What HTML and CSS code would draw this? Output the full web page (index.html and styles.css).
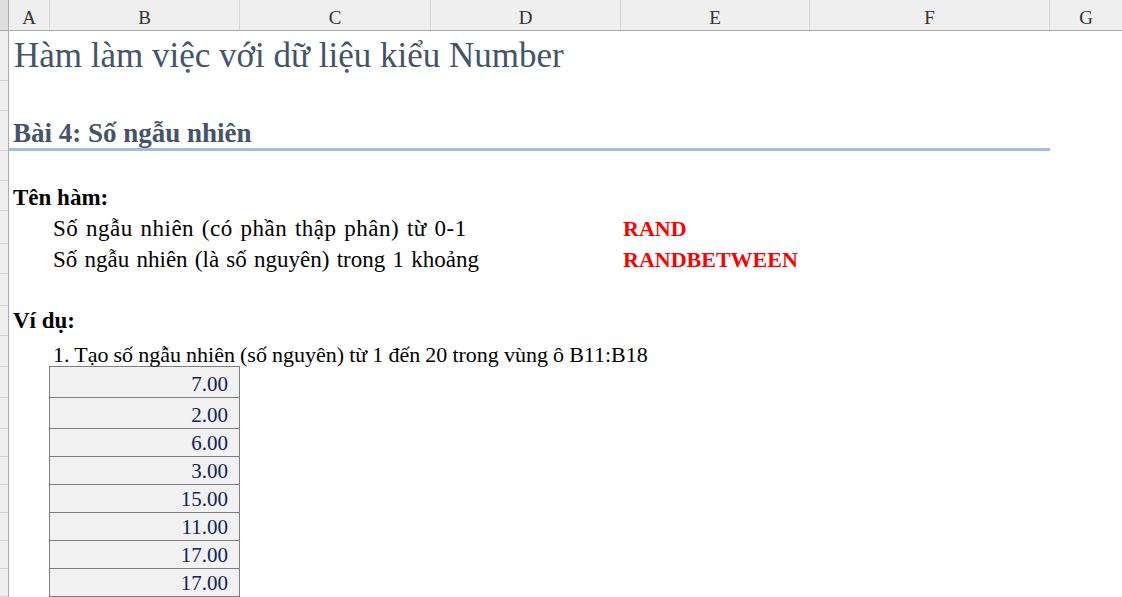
FILE: index.html
```html
<!DOCTYPE html>
<html lang="vi">
<head>
<meta charset="utf-8">
<title>Sheet</title>
<link rel="stylesheet" href="styles.css">
</head>
<body>
<div class="colheader">
  <div class="hcell corner"></div>
  <div class="hcell">A</div>
  <div class="hcell">B</div>
  <div class="hcell">C</div>
  <div class="hcell">D</div>
  <div class="hcell">E</div>
  <div class="hcell">F</div>
  <div class="hcell last">G</div>
</div>
<div class="body">
  <div class="rowheads">
    <div class="rh h50"></div>
    <div class="rh h30"></div>
    <div class="rh h40"></div>
    <div class="rh h30"></div>
    <div class="rh h30"></div>
    <div class="rh h33"></div>
    <div class="rh h30"></div>
    <div class="rh h32"></div>
    <div class="rh h30"></div>
    <div class="rh h31"></div>
    <div class="rh h31"></div>
    <div class="rh h31"></div>
    <div class="rh h28"></div>
    <div class="rh h28"></div>
    <div class="rh h28"></div>
    <div class="rh h28"></div>
    <div class="rh h28"></div>
    <div class="rh h28"></div>
  </div>
  <div class="sheet">
    <div class="row h50">
      <div class="cell title">Hàm làm việc với dữ liệu kiểu Number</div>
    </div>
    <div class="row h30"></div>
    <div class="row h40">
      <div class="cell heading">Bài 4: Số ngẫu nhiên</div>
    </div>
    <div class="row h30"></div>
    <div class="row h30">
      <div class="cell label">Tên hàm:</div>
    </div>
    <div class="row h33">
      <div class="cell colA"></div>
      <div class="cell text desc first span-bd pb4">Số ngẫu nhiên (có phần thập phân) từ 0-1</div>
      <div class="cell fn pb4">RAND</div>
    </div>
    <div class="row h30">
      <div class="cell colA"></div>
      <div class="cell text desc second span-bd pb3">Số ngẫu nhiên (là số nguyên) trong 1 khoảng</div>
      <div class="cell fn pb3">RANDBETWEEN</div>
    </div>
    <div class="row h32"></div>
    <div class="row h30">
      <div class="cell label pb4">Ví dụ:</div>
    </div>
    <div class="row h31">
      <div class="cell colA"></div>
      <div class="cell text example tbl-top">1. Tạo số ngẫu nhiên (số nguyên) từ 1 đến 20 trong vùng ô B11:B18</div>
    </div>
    <div class="row h31"><div class="cell colA"></div><div class="cell num">7.00</div></div>
    <div class="row h31"><div class="cell colA"></div><div class="cell num">2.00</div></div>
    <div class="row h28"><div class="cell colA"></div><div class="cell num">6.00</div></div>
    <div class="row h28"><div class="cell colA"></div><div class="cell num">3.00</div></div>
    <div class="row h28"><div class="cell colA"></div><div class="cell num">15.00</div></div>
    <div class="row h28"><div class="cell colA"></div><div class="cell num">11.00</div></div>
    <div class="row h28"><div class="cell colA"></div><div class="cell num">17.00</div></div>
    <div class="row h28"><div class="cell colA"></div><div class="cell num">17.00</div></div>
  </div>
</div>
</body>
</html>
```

FILE: styles.css
```css
* { box-sizing: border-box; }
html, body { margin: 0; padding: 0; background: #fff; overflow: hidden; }
body {
  width: 1122px;
  height: 597px;
  font-family: "Liberation Serif", "Times New Roman", serif;
  color: #000;
}
.colheader {
  display: grid;
  grid-template-columns: 9px 41px 190px 191px 190px 189px 240px 1fr;
  height: 31px;
  background: #efefef;
  border-bottom: 1px solid #ababab;
}
.hcell {
  border-right: 1px solid #d6d6d6;
  font-size: 19px;
  color: #333;
  display: flex;
  align-items: flex-end;
  justify-content: center;
  padding-bottom: 3px;
  line-height: 1;
}
.hcell.corner { background: #dedede; border-right: 1px solid #ababab; }
.hcell.last { border-right: none; }
.body { display: flex; }
.rowheads {
  width: 9px;
  flex: none;
  background: #efefef;
  border-right: 1px solid #ababab;
}
.rh { border-bottom: 1px solid #d6d6d6; }
.h50 { height: 50px; }
.h40 { height: 40px; }
.h33 { height: 33px; }
.h32 { height: 32px; }
.h31 { height: 31px; }
.h30 { height: 30px; }
.h28 { height: 28px; }
.sheet { flex: 1; }
.row {
  display: grid;
  grid-template-columns: 40px 191px 191px 190px 189px 240px 1fr;
  align-items: end;
}
.cell { white-space: nowrap; line-height: 1; }
.title {
  grid-column: 1 / 7;
  font-size: 35px;
  color: #44546a;
  padding-left: 5px;
  padding-bottom: 8px;
}
.heading {
  grid-column: 1 / 7;
  font-size: 27px;
  font-weight: bold;
  color: #44546a;
  padding-left: 4px;
  padding-bottom: 1px;
  border-bottom: 3px solid #a4bbe0;
}
.label {
  grid-column: 1 / 4;
  font-size: 23px;
  font-weight: bold;
  padding-left: 4px;
  padding-bottom: 2px;
}
.text {
  padding-left: 4px;
  padding-bottom: 2px;
}
.desc { font-size: 23px; }
.desc.first { word-spacing: 1.5px; letter-spacing: 0.5px; }
.desc.second { word-spacing: 1.5px; }
.example { font-size: 22px; padding-bottom: 0; word-spacing: -0.4px; }
.span-bd { grid-column: 2 / 5; }
.fn {
  font-size: 22px;
  font-weight: bold;
  color: #ff0000;
  padding-left: 2px;
  padding-bottom: 2px;
}
.pb3 { padding-bottom: 3px; }
.pb4 { padding-bottom: 4px; }
.tbl-top { border-bottom: 1px solid #7f7f7f; }
.num {
  height: 100%;
  font-size: 21px;
  color: #0e2160;
  background: #f2f2f2;
  border-left: 1px solid #7f7f7f;
  border-right: 1px solid #7f7f7f;
  border-bottom: 1px solid #7f7f7f;
  padding-right: 11px;
  padding-bottom: 2px;
  display: flex;
  align-items: flex-end;
  justify-content: flex-end;
}
```
